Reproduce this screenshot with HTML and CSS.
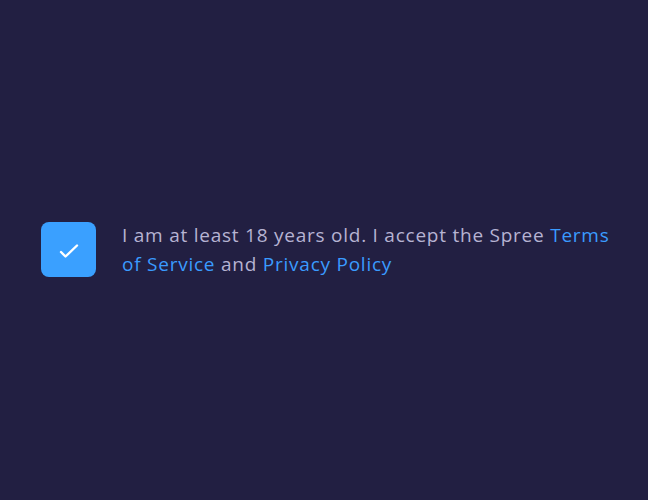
FILE: index.html
```html
<!DOCTYPE html>
<html>
<head>
<meta charset="utf-8">
<link rel="stylesheet" href="styles.css">
</head>
<body>
<div class="page">
  <label class="consent">
    <span class="box">
      <svg width="20" height="20" viewBox="0 0 20 20"><path d="M2 12 L6.5 16.5 L18 5.5" fill="none" stroke="#fff" stroke-width="2.4" stroke-linecap="round" stroke-linejoin="round"/></svg>
    </span>
    <span class="text">I am at least 18 years old. I accept the Spree <a href="#">Terms of Service</a> and <a href="#">Privacy Policy</a></span>
  </label>
</div>
</body>
</html>
```
FILE: styles.css
```css
html, body {
  margin: 0;
  padding: 0;
  background: #221f42;
  height: 100%;
}
.page {
  height: 500px;
  display: flex;
  align-items: center;
  padding: 0 30px 0 41px;
  box-sizing: border-box;
}
.consent {
  display: flex;
  align-items: flex-start;
  gap: 26px;
  margin-top: 0;
}
.box {
  flex: none;
  width: 55px;
  height: 55px;
  border-radius: 8px;
  background: #3aa0ff;
  display: flex;
  align-items: center;
  justify-content: center;
}
.text {
  font-family: "Open Sans", sans-serif;
  font-size: 19px;
  line-height: 28.5px;
  color: #b6b3d2;
  width: 500px;
  letter-spacing: 0.76px;
  margin-top: -1px;
}
.text a {
  color: #3a9bff;
  text-decoration: none;
}
```
